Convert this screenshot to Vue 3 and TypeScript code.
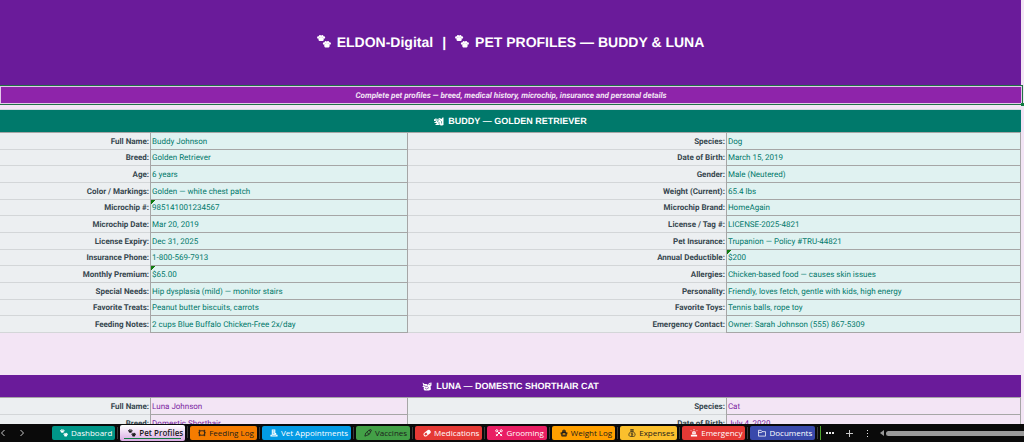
<script setup lang="ts">
import { ref } from 'vue'

interface Field {
  label: string
  value: string
  flagged?: boolean
}
type Row = [Field, Field]

interface Tab {
  name: string
  icon: string
  bg: string
  dark?: boolean
}

const f = (label: string, value: string, flagged = false): Field => ({ label, value, flagged })

const buddy: Row[] = [
  [f('Full Name:', 'Buddy Johnson'), f('Species:', 'Dog')],
  [f('Breed:', 'Golden Retriever'), f('Date of Birth:', 'March 15, 2019')],
  [f('Age:', '6 years'), f('Gender:', 'Male (Neutered)')],
  [f('Color / Markings:', 'Golden — white chest patch'), f('Weight (Current):', '65.4 lbs')],
  [f('Microchip #:', '985141001234567', true), f('Microchip Brand:', 'HomeAgain')],
  [f('Microchip Date:', 'Mar 20, 2019'), f('License / Tag #:', 'LICENSE-2025-4821')],
  [f('License Expiry:', 'Dec 31, 2025'), f('Pet Insurance:', 'Trupanion — Policy #TRU-44821')],
  [f('Insurance Phone:', '1-800-569-7913'), f('Annual Deductible:', '$200', true)],
  [f('Monthly Premium:', '$65.00', true), f('Allergies:', 'Chicken-based food — causes skin issues')],
  [f('Special Needs:', 'Hip dysplasia (mild) — monitor stairs'), f('Personality:', 'Friendly, loves fetch, gentle with kids, high energy')],
  [f('Favorite Treats:', 'Peanut butter biscuits, carrots'), f('Favorite Toys:', 'Tennis balls, rope toy')],
  [f('Feeding Notes:', '2 cups Blue Buffalo Chicken-Free 2x/day'), f('Emergency Contact:', 'Owner: Sarah Johnson (555) 867-5309')],
]

const luna: Row[] = [
  [f('Full Name:', 'Luna Johnson'), f('Species:', 'Cat')],
  [f('Breed:', 'Domestic Shorthair'), f('Date of Birth:', 'July 4, 2020')],
]

const tabs: Tab[] = [
  { name: 'Dashboard', icon: 'paws', bg: '#009688' },
  { name: 'Pet Profiles', icon: 'paws', bg: '#f3e5f5', dark: true },
  { name: 'Feeding Log', icon: 'bowl', bg: '#f57c00', dark: true },
  { name: 'Vet Appointments', icon: 'clinic', bg: '#039be5' },
  { name: 'Vaccines', icon: 'syringe', bg: '#43a047', dark: true },
  { name: 'Medications', icon: 'pill', bg: '#e53935' },
  { name: 'Grooming', icon: 'scissors', bg: '#e91e63' },
  { name: 'Weight Log', icon: 'scale', bg: '#ffa000', dark: true },
  { name: 'Expenses', icon: 'money', bg: '#fbc02d', dark: true },
  { name: 'Emergency', icon: 'siren', bg: '#e53935' },
  { name: 'Documents', icon: 'folder', bg: '#3949ab' },
]

const active = ref('Pet Profiles')
</script>

<template>
  <div class="workbook">
    <svg class="defs" aria-hidden="true">
      <symbol id="paws" viewBox="0 0 28 26">
        <g fill="currentColor">
          <ellipse cx="2.6" cy="5" rx="2.4" ry="2.6" />
          <ellipse cx="6" cy="2.6" rx="2.4" ry="2.4" />
          <ellipse cx="10.5" cy="2.6" rx="2.4" ry="2.4" />
          <ellipse cx="13.8" cy="5" rx="2.4" ry="2.6" />
          <path d="M8.2 4C5 4 2.500 7 3 9.500C3.500 12.500 6 12.500 8.200 12C10.500 12.500 13 12.500 13.500 9.500C14 7 11.500 4 8.200 4Z" />
          <ellipse cx="14.200" cy="17" rx="2.400" ry="2.600" />
          <ellipse cx="17.500" cy="14.500" rx="2.400" ry="2.400" />
          <ellipse cx="22" cy="14.500" rx="2.400" ry="2.400" />
          <ellipse cx="25.400" cy="17" rx="2.400" ry="2.600" />
          <path d="M19.800 16C16.500 16 14 19.500 14.500 22C15 25.500 17.500 25.500 19.800 25C22.200 25.500 24.800 25.500 25.300 22C25.800 19.500 23 16 19.800 16Z" />
        </g>
      </symbol>
      <symbol id="dog" viewBox="0 0 20 18">
        <path d="M0 5L3 3L8 4L11 2L15 4L17 1H19V16L16 17H13L12 15L9 16H3V14H6L4 12H1V10H4L3 8H0Z" fill="currentColor" />
        <path d="M3 6H8L11 5M6 9L9 8M8 12L12 12M13 7L15 9V13" fill="none" stroke="#00796b" stroke-width="1.200" />
      </symbol>
      <symbol id="cat" viewBox="0 0 20 18">
        <path d="M1 1L5 4H9L12 6L14 2L19 1V7L17 9L18 15L14 17H5L3 14L4 11L0 8H3Z" fill="currentColor" />
        <path d="M4 7L8 9L12 8M14 5L17 4M6 12L9 14L14 11" fill="none" stroke="#6a1b9a" stroke-width="1.300" />
      </symbol>
      <symbol id="bowl" viewBox="0 0 18 18">
        <g fill="none" stroke="currentColor" stroke-width="1.800">
          <path d="M2 3H5M13 3H16M2 15H5M13 15H16M3 3V7L1 9L3 11V15M15 3V7L17 9L15 11V15" />
          <path d="M5 4H13L15 9L13 14H5L3 9Z" />
        </g>
      </symbol>
      <symbol id="clinic" viewBox="0 0 18 18">
        <path d="M4 1H12V9H14V13H17V17H1V13H4Z" fill="currentColor" />
        <path d="M6 4H10M6 7H10M6 10H10M4 14H14" stroke="#039be5" stroke-width="1.200" />
      </symbol>
      <symbol id="syringe" viewBox="0 0 18 18">
        <path d="M2 16L4 9L11 3L15 6L12 12L5 15ZM11 3L16 1M15 6L17 2M7 8L11 11" fill="none" stroke="currentColor" stroke-width="1.800" />
      </symbol>
      <symbol id="pill" viewBox="0 0 18 18">
        <g transform="rotate(-38 9 9)">
          <rect x="0" y="5" width="18" height="9" rx="4.500" fill="currentColor" />
          <path d="M2 9.500A2.500 2.500 0 0 1 4.500 7H8V12H4.500A2.500 2.500 0 0 1 2 9.500Z" fill="#e53935" />
        </g>
      </symbol>
      <symbol id="scissors" viewBox="0 0 18 18">
        <g fill="none" stroke="currentColor" stroke-width="2.200">
          <path d="M5 5L16 16M13 5L2 16" />
          <circle cx="4" cy="4" r="2.400" />
          <circle cx="14" cy="4" r="2.400" />
          <path d="M2 12L6 15M16 12L12 15" />
        </g>
      </symbol>
      <symbol id="scale" viewBox="0 0 18 18">
        <path d="M9 1V5M5 4H13M1 9H17M3 9V13H15V9" fill="none" stroke="currentColor" stroke-width="2" />
        <path d="M5 5H13L15 10H3ZM2 14H16L14 17H4Z" fill="currentColor" />
        <circle cx="9" cy="11" r="2" fill="#ffa000" />
      </symbol>
      <symbol id="money" viewBox="0 0 18 18">
        <path d="M6 1H12L11 5H7ZM7 5C3 8 2 11 2 13C2 16 4 17 9 17C14 17 16 16 16 13C16 11 15 8 11 5Z" fill="none" stroke="currentColor" stroke-width="1.600" />
        <path d="M11.500 9H8C6.500 9 6.500 11.500 8 11.500H10C11.500 11.500 11.500 14 10 14H6.500M9 7.500V15.500" fill="none" stroke="currentColor" stroke-width="1.200" />
      </symbol>
      <symbol id="siren" viewBox="0 0 18 18">
        <path d="M5 12V8C5 4 13 4 13 8V12ZM2 13H16V17H2Z" fill="currentColor" />
        <path d="M9 0V3M2 3L4 5M16 3L14 5" stroke="currentColor" stroke-width="1.700" />
        <path d="M9 7V10" stroke="#e53935" stroke-width="1.400" />
      </symbol>
      <symbol id="folder" viewBox="0 0 18 18">
        <path d="M1 3H7L9 6H17V16H1ZM1 8H8L10 6" fill="none" stroke="currentColor" stroke-width="1.700" />
      </symbol>
    </svg>

    <main class="sheet">
      <h1 class="title">
        <svg class="paws"><use href="#paws" /></svg>
        <span>ELDON-Digital</span>
        <span class="bar">|</span>
        <svg class="paws"><use href="#paws" /></svg>
        <span>PET PROFILES — BUDDY &amp; LUNA</span>
      </h1>

      <div class="selected">
        <p class="subtitle">Complete pet profiles — breed, medical history, microchip, insurance and personal details</p>
        <i class="handle"></i>
      </div>

      <h2 class="section teal">
        <svg class="pet"><use href="#dog" /></svg>BUDDY — GOLDEN RETRIEVER
      </h2>
      <table class="profile buddy">
        <colgroup><col class="c1" /><col class="c2" /><col class="c3" /><col class="c4" /></colgroup>
        <tbody>
          <tr v-for="(row, i) in buddy" :key="i">
            <template v-for="cell in row" :key="cell.label">
              <th scope="row">{{ cell.label }}</th>
              <td :class="{ flagged: cell.flagged }">{{ cell.value }}</td>
            </template>
          </tr>
        </tbody>
      </table>

      <h2 class="section purple">
        <svg class="pet"><use href="#cat" /></svg>LUNA — DOMESTIC SHORTHAIR CAT
      </h2>
      <table class="profile luna">
        <colgroup><col class="c1" /><col class="c2" /><col class="c3" /><col class="c4" /></colgroup>
        <tbody>
          <tr v-for="(row, i) in luna" :key="i">
            <template v-for="cell in row" :key="cell.label">
              <th scope="row">{{ cell.label }}</th>
              <td>{{ cell.value }}</td>
            </template>
          </tr>
        </tbody>
      </table>
    </main>

    <nav class="tabbar" aria-label="Sheets">
      <div class="arrows">
        <button type="button" aria-label="Previous sheet"><svg viewBox="0 0 6 8"><path d="M4.500 1L1.500 4L4.500 7" /></svg></button>
        <button type="button" aria-label="Next sheet"><svg viewBox="0 0 6 8"><path d="M1.500 1L4.500 4L1.500 7" /></svg></button>
      </div>
      <div class="tabs">
        <button
          v-for="tab in tabs"
          :key="tab.name"
          type="button"
          class="tab"
          :class="{ dark: tab.dark, active: tab.name === active }"
          :style="{ backgroundColor: tab.bg }"
          @click="active = tab.name"
        >
          <svg class="glyph"><use :href="'#' + tab.icon" /></svg>
          <span>{{ tab.name }}</span>
        </button>
      </div>
      <i class="edge"></i>
      <div class="tools">
        <button type="button" aria-label="More sheets"><svg viewBox="0 0 8 8"><path class="fill" d="M0 3H2V5H0ZM3 3H5V5H3ZM6 3H8V5H6Z" /></svg></button>
        <button type="button" aria-label="New sheet"><svg viewBox="0 0 8 8"><path d="M4.500 1V8M1 4.500H8" /></svg></button>
        <button type="button" aria-label="Options"><svg viewBox="0 0 8 8"><path class="fill" d="M3 1H4V2H3ZM3 4H4V5H3ZM3 7H4V8H3Z" /></svg></button>
      </div>
      <div class="scroll">
        <button type="button" aria-label="Scroll left"><svg viewBox="0 0 6 6"><path class="fill grey" d="M5 0V6L1 3Z" /></svg></button>
        <i class="thumb"></i>
      </div>
    </nav>
  </div>
</template>

<style>
body {
  margin: 0;
}
</style>

<style scoped>
.workbook {
  display: flex;
  flex-direction: column;
  height: 100vh;
  overflow: hidden;
  background: #f3e5f5;
  font-family: "Liberation Sans", Arial, sans-serif;
  text-rendering: geometricPrecision;
}
.defs {
  position: absolute;
  width: 0;
  height: 0;
}
.sheet {
  flex: 1;
  min-height: 0;
  overflow: hidden;
  padding-right: 3px;
}
.title {
  display: flex;
  align-items: center;
  justify-content: center;
  gap: 6px;
  box-sizing: border-box;
  height: 85px;
  margin: 0;
  padding-bottom: 2px;
  background: #6a1b9a;
  color: #fff;
  font-size: 14px;
  line-height: 16px;
}
.title .bar {
  margin: 0 3px;
}
.paws {
  width: 14px;
  height: 13px;
}
.selected {
  position: relative;
  border: 1px solid #217346;
  border-left: 0;
  margin-right: -2px;
}
.subtitle {
  margin: 0;
  padding-top: 1px;
  border: 1px solid #e3c8ea;
  background: #8e24aa;
  color: #f3e5f5;
  font-family: Roboto, "Liberation Sans", sans-serif;
  font-size: 8px;
  line-height: 15px;
  font-weight: bold;
  font-style: italic;
  text-align: center;
}
.handle {
  position: absolute;
  right: -2px;
  bottom: -2px;
  width: 3px;
  height: 3px;
  background: #107c41;
}
.section {
  display: flex;
  align-items: center;
  justify-content: center;
  gap: 4px;
  height: 22px;
  margin: 0;
  color: #fff;
  font-size: 9px;
  line-height: 12px;
  border-bottom: 1px solid #a6a6a6;
}
.teal {
  margin-top: 4px;
  border-top: 1px solid #cfd8dc;
  background: #00796b;
}
.purple {
  margin-top: 42px;
  background: #6a1b9a;
}
.pet {
  width: 10px;
  height: 9px;
}
.profile {
  width: 100%;
  table-layout: fixed;
  border-collapse: separate;
  border-spacing: 0;
  font-family: Roboto, "Liberation Sans", sans-serif;
  font-size: 8px;
  line-height: 12px;
}
.buddy {
  height: 200px;
}
.luna {
  height: 34px;
}
.c1 {
  width: 14.700%;
}
.c2 {
  width: 25.300%;
}
.c3 {
  width: 31.100%;
}
.c4 {
  width: 28.900%;
}
th,
td {
  padding: 2px 1px 0;
  white-space: nowrap;
  vertical-align: middle;
}
th {
  background: #eceff1;
  border-bottom: 1px solid #d3d6d8;
  color: #37474f;
  text-align: right;
  font-weight: bold;
}
td {
  border: 1px solid #a6a6a6;
  border-top: 0;
  background: #e0f2f1;
  color: #00796b;
}
.luna td {
  background: #f3e5f5;
  color: #7b1fa2;
}
td.flagged {
  background: linear-gradient(135deg, #107c10 3px, #e0f2f1 3px);
}
.tabbar {
  display: flex;
  align-items: center;
  height: 18px;
  background: #0a0a0a;
}
button {
  display: flex;
  align-items: center;
  padding: 0;
  border: 0;
  background: none;
  color: #fff;
}
.arrows {
  display: flex;
  gap: 13px;
  width: 52px;
}
.arrows svg {
  width: 6px;
  height: 8px;
}
.arrows path,
.tools path {
  fill: none;
  stroke: #c8c8c8;
  stroke-width: 1;
}
.tabbar path.fill {
  fill: #e6e6e6;
  stroke: none;
}
.tabbar path.grey {
  fill: #9a9a9a;
}
.tabs {
  display: flex;
  align-items: center;
  gap: 5px;
}
.tab {
  position: relative;
  gap: 3px;
  height: 14px;
  padding: 0 3px 0 8px;
  border-radius: 2px;
  font-family: "Open Sans", "Noto Sans", sans-serif;
  font-size: 8px;
  line-height: 12px;
  white-space: nowrap;
}
.tab::after {
  content: "";
  position: absolute;
  right: -3px;
  top: 1px;
  width: 1px;
  height: 12px;
  background: #3a3a3a;
}
.tab.dark {
  color: #1c1c1c;
}
.tab.active {
  align-self: flex-start;
  height: 16px;
  padding-right: 2px;
  font-weight: 600;
  background-image: linear-gradient(#fff, #d9a9e3);
}
.tab.active::before {
  content: "";
  position: absolute;
  left: 4px;
  right: 4px;
  bottom: 2px;
  height: 1px;
  background: #107c41;
}
.glyph {
  width: 8px;
  height: 8px;
}
.edge {
  width: 1px;
  height: 14px;
  margin-left: 5px;
  background: #4ea72e;
}
.tools {
  display: flex;
  gap: 11px;
  margin-left: 5px;
}
.tools svg {
  width: 8px;
  height: 8px;
}
.scroll {
  display: flex;
  flex: 1;
  align-items: center;
  gap: 1px;
  margin-left: 7px;
}
.scroll svg {
  width: 6px;
  height: 6px;
}
.thumb {
  flex: 1;
  height: 5px;
  border-radius: 3px 0 0 3px;
  background: #9a9a9a;
}
</style>
